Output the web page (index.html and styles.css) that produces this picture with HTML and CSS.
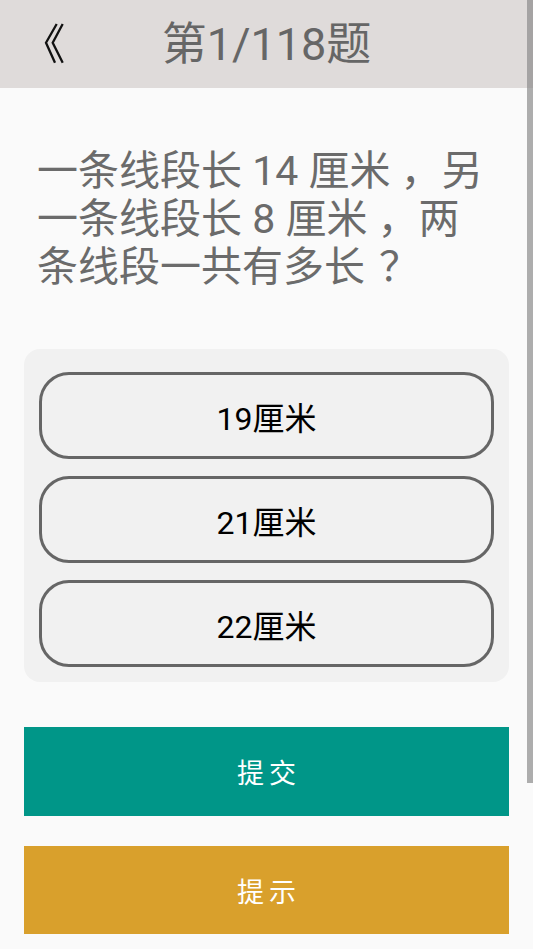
FILE: index.html
```html
<!DOCTYPE html>
<html lang="zh">
<head>
<meta charset="utf-8">
<link rel="stylesheet" href="styles.css">
</head>
<body>
<div class="app">
  <header class="topbar">
    <svg class="back" width="20" height="42" viewBox="0 0 20 42" aria-label="返回">
      <polyline points="12.7,1 2,19.7 11,39.7" fill="none" stroke="#111" stroke-width="2.3"/>
      <polyline points="18.7,1 8.7,19.7 18.7,39.7" fill="none" stroke="#111" stroke-width="2.3"/>
    </svg>
    <h1 class="title">第1/118题</h1>
  </header>
  <main class="content">
    <p class="question">一条线段长 14 厘米 ，另一条线段长 8 厘米 ，两条线段一共有多长<span class="fw">？</span></p>
    <div class="options">
      <div class="option">19厘米</div>
      <div class="option">21厘米</div>
      <div class="option">22厘米</div>
    </div>
    <button class="btn btn-submit">提交</button>
    <button class="btn btn-hint">提示</button>
  </main>
  <div class="scrollbar"></div>
</div>
</body>
</html>
```
FILE: styles.css
```css
html, body {
  margin: 0;
  padding: 0;
  background: #fafafa;
}
body {
  font-family: Roboto, "Noto Sans CJK SC", sans-serif;
  width: 533px;
  height: 949px;
  overflow: hidden;
}
.app {
  position: relative;
  height: 949px;
}
.topbar {
  height: 88px;
  background: #dfdbda;
  display: flex;
  align-items: center;
  justify-content: center;
  position: relative;
}
.back {
  position: absolute;
  left: 44px;
  top: 23px;
}
.title {
  margin: 0;
  font-size: 45px;
  font-weight: 400;
  color: #666;
  line-height: 1;
}
.content {
  padding: 0 24px;
}
.question {
  margin: 59px 20px 0 13px;
  font-size: 41px;
  line-height: 48px;
  color: #6b6b6b;
}
.fw {
  font-family: "Noto Sans CJK SC", sans-serif;
  margin-left: 14px;
  line-height: 1;
}
.options {
  margin-top: 58px;
  background: #f1f1f1;
  border-radius: 16px;
  padding: 23px 15px 15px;
  display: flex;
  flex-direction: column;
  gap: 17px;
}
.option {
  height: 87px;
  box-sizing: border-box;
  border: 3px solid #666;
  border-radius: 30px;
  display: flex;
  align-items: center;
  justify-content: center;
  font-size: 32px;
  color: #000;
}
.btn {
  display: block;
  width: 100%;
  border: none;
  color: #fff;
  font-family: "Noto Sans CJK SC", sans-serif;
  font-size: 27px;
  letter-spacing: 5px;
  padding: 0 0 0 5px;
}
.btn-submit {
  margin-top: 45px;
  height: 89px;
  background: #009688;
}
.btn-hint {
  margin-top: 30px;
  height: 88px;
  background: #d9a02c;
}
.scrollbar {
  position: absolute;
  top: 0;
  right: 0;
  width: 6px;
  height: 783px;
  background: rgba(140, 140, 140, 0.7);
}
```
